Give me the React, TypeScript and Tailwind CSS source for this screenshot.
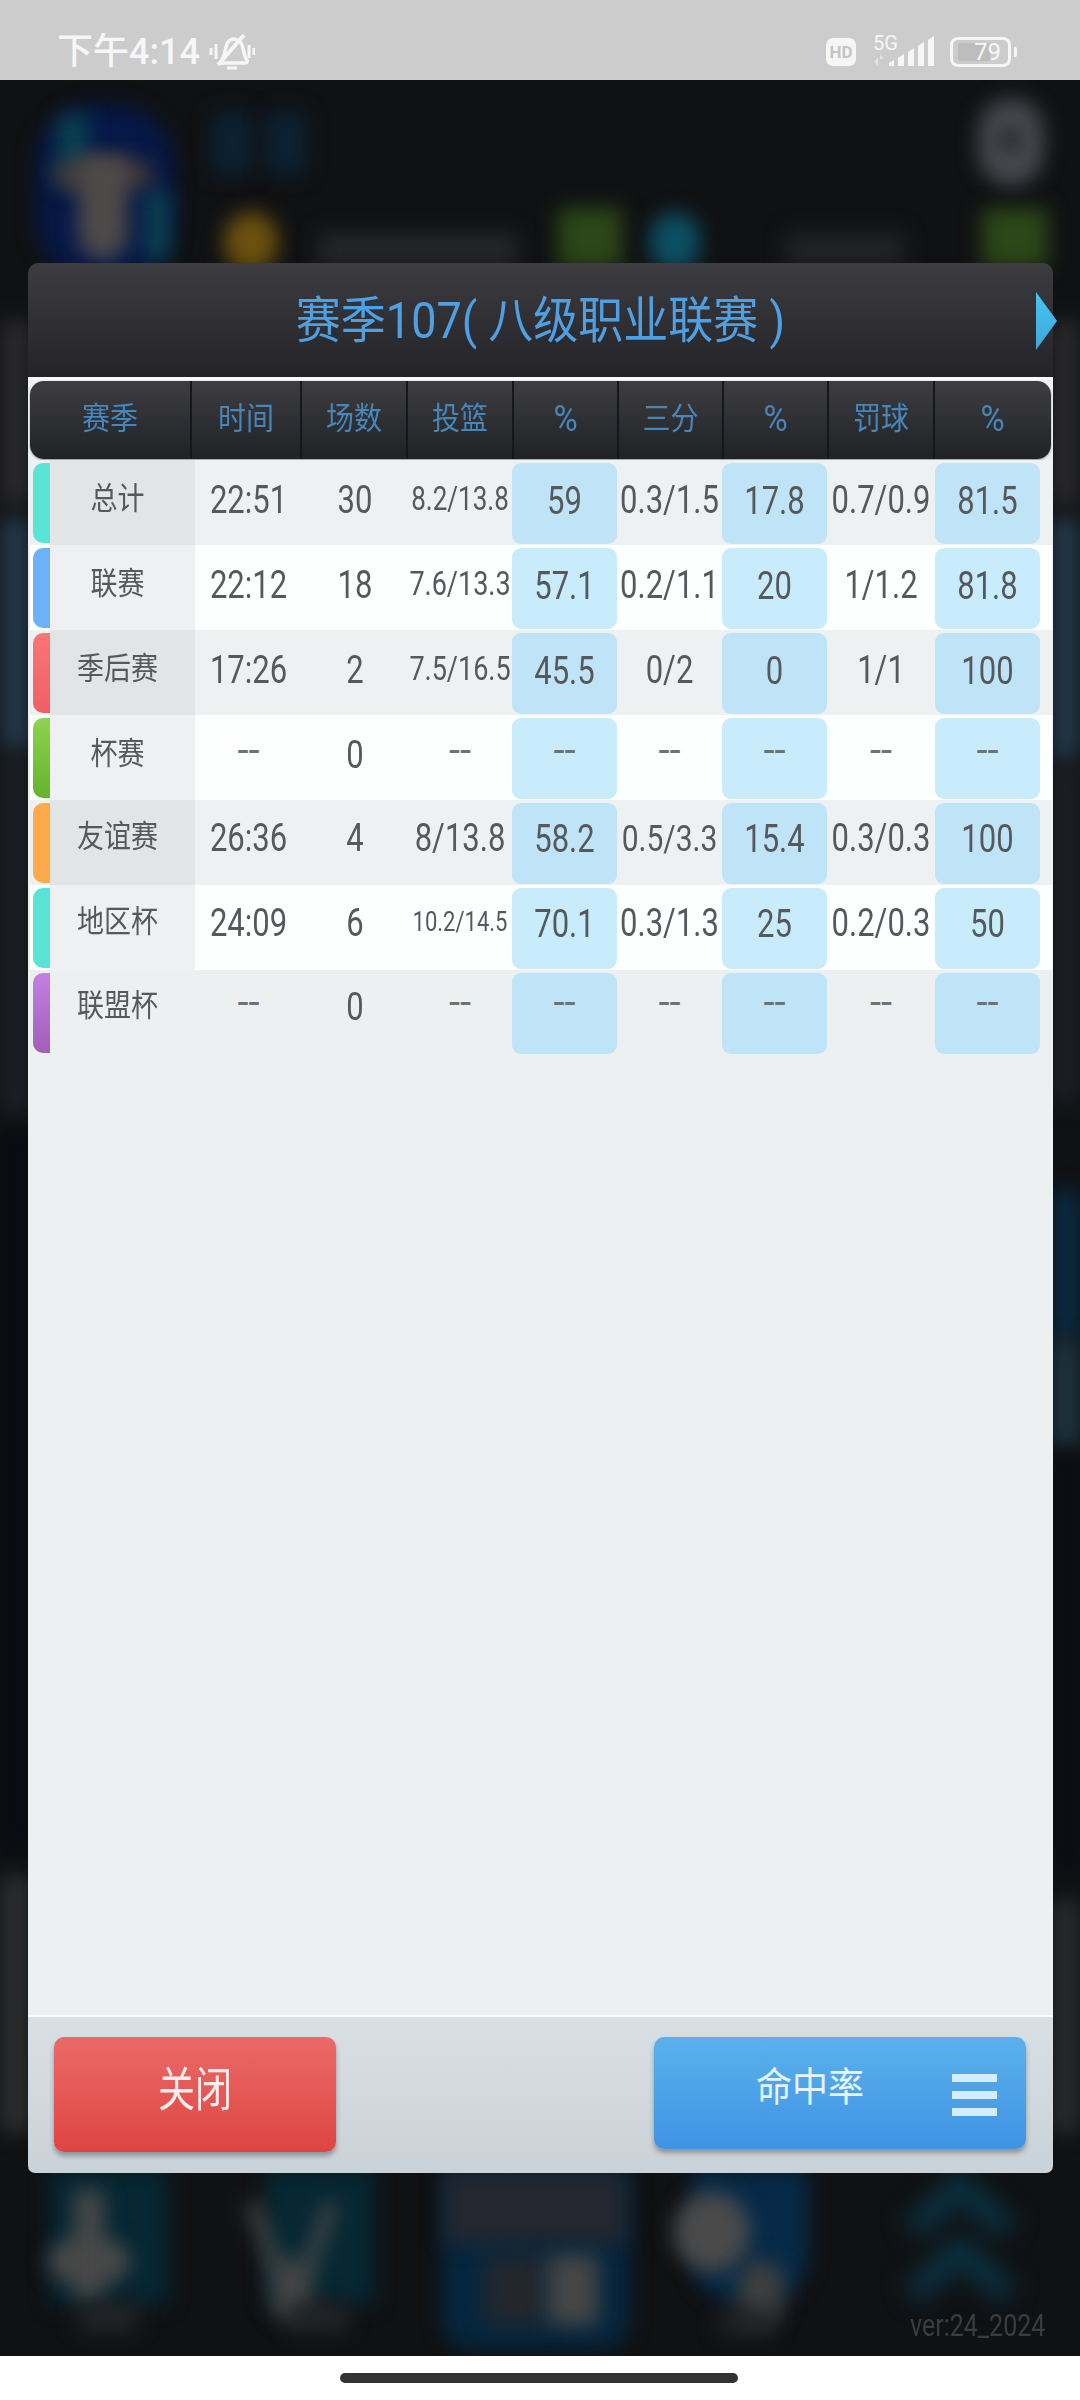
import React from 'react';

type Row = {
  name: string;
  bar: string;
  rowBg: string;
  nameBg: string;
  pctBg: string;
  vals: [string, string, string, string, string, string, string, string];
  shotSize?: string;
  threeSize?: string;
  lift?: string;
};

const rows: Row[] = [
  { name: '总计', bar: 'bg-[#5ae4d6]', rowBg: 'bg-[#eef1f2]', nameBg: 'bg-[#e1e5e6]', pctBg: 'bg-[#bfe3f7]', vals: ['22:51', '30', '8.2/13.8', '59', '0.3/1.5', '17.8', '0.7/0.9', '81.5'], shotSize: 'text-[26px]' },
  { name: '联赛', bar: 'bg-[#6cb2f8]', rowBg: 'bg-[#fdfefe]', nameBg: 'bg-[#eef0f1]', pctBg: 'bg-[#c9ecfd]', vals: ['22:12', '18', '7.6/13.3', '57.1', '0.2/1.1', '20', '1/1.2', '81.8'], shotSize: 'text-[27px]' },
  { name: '季后赛', bar: 'bg-gradient-to-b from-[#fb7676] to-[#ee5f63]', rowBg: 'bg-[#eef1f2]', nameBg: 'bg-[#e1e5e6]', pctBg: 'bg-[#bfe3f7]', vals: ['17:26', '2', '7.5/16.5', '45.5', '0/2', '0', '1/1', '100'], shotSize: 'text-[27px]' },
  { name: '杯赛', bar: 'bg-gradient-to-b from-[#90d24e] to-[#62b42b]', rowBg: 'bg-[#fdfefe]', nameBg: 'bg-[#eef0f1]', pctBg: 'bg-[#c9ecfd]', vals: ['--', '0', '--', '--', '--', '--', '--', '--'] },
  { name: '友谊赛', bar: 'bg-[#ffaa4a]', rowBg: 'bg-[#eef1f2]', nameBg: 'bg-[#e1e5e6]', pctBg: 'bg-[#bfe3f7]', vals: ['26:36', '4', '8/13.8', '58.2', '0.5/3.3', '15.4', '0.3/0.3', '100'], threeSize: 'text-[30px]', lift: '-mt-[4px]' },
  { name: '地区杯', bar: 'bg-[#5ae4d6]', rowBg: 'bg-[#fdfefe]', nameBg: 'bg-[#eef0f1]', pctBg: 'bg-[#c9ecfd]', vals: ['24:09', '6', '10.2/14.5', '70.1', '0.3/1.3', '25', '0.2/0.3', '50'], shotSize: 'text-[22px]', lift: '-mt-[4px]' },
  { name: '联盟杯', bar: 'bg-gradient-to-b from-[#c280e2] to-[#a05fb8]', rowBg: 'bg-[#edf0f1]', nameBg: 'bg-[#edf0f1]', pctBg: 'bg-[#bfe3f7]', vals: ['--', '0', '--', '--', '--', '--', '--', '--'], lift: '-mt-[6px]' },
];

const headers = ['赛季', '时间', '场数', '投篮', '%', '三分', '%', '罚球', '%'];

// backdrop behind the dialog, everything here is out of focus
const blobs = [
  'left-[36px] top-[25px] w-[138px] h-[175px] rounded-[60px] bg-[#061847]',
  'left-[58px] top-[35px] w-[30px] h-[70px] bg-[#0a4250]',
  'left-[145px] top-[110px] w-[24px] h-[70px] bg-[#0a4250]',
  'left-[52px] top-[82px] w-[102px] h-[26px] rounded-full bg-[#443838]',
  'left-[78px] top-[75px] w-[50px] h-[105px] rounded-b-[30px] bg-[#4e4a49]',
  'left-[212px] top-[32px] w-[40px] h-[62px] bg-[#0c2233]',
  'left-[266px] top-[32px] w-[40px] h-[62px] bg-[#0c2233]',
  'left-[978px] top-[18px] w-[66px] h-[88px] rounded-full bg-[#46494e]',
  'left-[1002px] top-[48px] w-[16px] h-[24px] rounded-full bg-[#1a1c20]',
  'left-[224px] top-[132px] w-[54px] h-[60px] rounded-full bg-[#6b510e]',
  'left-[318px] top-[152px] w-[200px] h-[36px] bg-[#232527]',
  'left-[558px] top-[128px] w-[64px] h-[60px] bg-[#2c4718]',
  'left-[650px] top-[132px] w-[50px] h-[60px] rounded-full bg-[#0c4f63]',
  'left-[785px] top-[152px] w-[120px] h-[36px] bg-[#202224]',
  'left-[982px] top-[128px] w-[66px] h-[60px] bg-[#2c4718]',
  'left-0 top-[240px] w-[30px] h-[185px] bg-[#2a2a2c]',
  'left-0 top-[437px] w-[30px] h-[235px] bg-[#24384a]',
  'left-0 top-[672px] w-[30px] h-[365px] bg-[#1b1f24]',
  'left-0 top-[1050px] w-[30px] h-[720px] bg-[#070b10]',
  'left-0 top-[1796px] w-[30px] h-[257px] bg-[#2c2d2f]',
  'left-[1052px] top-[240px] w-[28px] h-[185px] bg-[#2a2a2c]',
  'left-[1052px] top-[437px] w-[28px] h-[245px] bg-[#24394b]',
  'left-[1052px] top-[682px] w-[28px] h-[340px] bg-[#1c2026]',
  'left-[1052px] top-[1110px] w-[28px] h-[150px] bg-[#0a2a44]',
  'left-[1052px] top-[1260px] w-[28px] h-[110px] bg-[#1f3540]',
  'left-[1052px] top-[1370px] w-[28px] h-[420px] bg-[#0a0d14]',
  'left-[1052px] top-[1820px] w-[28px] h-[233px] bg-[#2a2b2d]',
  // bottom nav
  'left-[50px] top-[2090px] w-[118px] h-[135px] bg-[#062733]',
  'left-[48px] top-[2160px] w-[82px] h-[42px] rounded-full bg-[#484848]',
  'left-[74px] top-[2110px] w-[30px] h-[110px] bg-[#484848]',
  'left-[78px] top-[2222px] w-[60px] h-[30px] bg-[#222426]',
  'left-[265px] top-[2090px] w-[110px] h-[135px] bg-[#062733]',
  'left-[272px] top-[2180px] w-[40px] h-[60px] rounded-[14px] bg-[#454545]',
  'left-[258px] top-[2120px] w-[14px] h-[75px] -rotate-[20deg] bg-[#454545]',
  'left-[312px] top-[2120px] w-[14px] h-[75px] rotate-[20deg] bg-[#454545]',
  'left-[288px] top-[2222px] w-[60px] h-[30px] bg-[#222426]',
  'left-[442px] top-[2090px] w-[188px] h-[180px] rounded-b-[30px] bg-[#06263e]',
  'left-[445px] top-[2093px] w-[180px] h-[70px] bg-[#24272f]',
  'left-[485px] top-[2175px] w-[60px] h-[70px] bg-[#23272d]',
  'left-[548px] top-[2175px] w-[50px] h-[70px] bg-[#464646]',
  'left-[692px] top-[2090px] w-[116px] h-[135px] rounded-b-[50px] bg-[#062a48]',
  'left-[674px] top-[2112px] w-[76px] h-[80px] rounded-full bg-[#4a4a4a]',
  'left-[738px] top-[2180px] w-[46px] h-[65px] rounded-full bg-[#3e3e3e]',
  'left-[720px] top-[2230px] w-[55px] h-[25px] bg-[#222426]',
];

function Cell({ value, size, cjk }: { value: string; size?: string; cjk?: boolean }) {
  if (value === '--') {
    return <span className="inline-block text-[40px] leading-none text-[#6d7275] -translate-y-[5px]">--</span>;
  }
  return (
    <span className={`inline-block leading-none whitespace-nowrap text-[#55595c] ${cjk ? 'scale-y-[1.15]' : 'scale-y-[1.25]'} ${size ?? 'text-[31px]'}`}>
      {value}
    </span>
  );
}

function StatusBar() {
  return (
    <div className="h-20 bg-[#cccccc] flex items-center justify-between pl-[57px] pr-[63px] pt-[24px] text-[#f6f6f6]">
      <div className="flex items-center">
        <span className="text-[36px] leading-none font-medium">下午4:14</span>
        <svg className="ml-[9px]" width="46" height="36" viewBox="0 0 46 36" fill="none" stroke="#f6f6f6">
          <path d="M13 25 C17 21 15 12 20 7 C25 3 31 6 33 11 C35 17 35 23 38 26 C39 28 38 29 36 29 L12 29" strokeWidth="3.5" />
          <path d="M9 31 L35 1" strokeWidth="4" />
          <path d="M18 34 L28 34" strokeWidth="3" />
          <path d="M2 14 V21 M7 10 V25 M40 11 V24 M45 14 V21" strokeWidth="3" />
        </svg>
      </div>
      <div className="flex items-center">
        <span className="w-[30px] h-[28px] rounded-[7px] bg-[#f6f6f6] flex items-center justify-center text-[17px] font-bold leading-none text-[#c4c4c4]">HD</span>
        <div className="relative w-[62px] h-[32px] ml-[17px]">
          <span className="absolute left-0 -top-[3px] text-[20px] leading-none">5G</span>
          <svg className="absolute left-0 top-0" width="62" height="32" viewBox="0 0 62 32" fill="#f6f6f6">
            <path d="M16 30 h5 v-6 l-5 3z M25 30 h6 v-12 l-6 4z M35 30 h6 v-18 l-6 4z M45 30 h6 v-24 l-6 4z M55 30 h6 v-30 l-6 4z" />
            <path d="M1 26 l4 -5 v9z M7 18 l4 5 h-4z" fill="#e2e2e2" />
          </svg>
        </div>
        <div className="relative ml-[15px] w-[61px] h-[30px] rounded-[8px] border-[3px] border-[#f6f6f6] flex items-center justify-center">
          <span className="absolute left-[5px] top-[3px] bottom-[3px] w-[32px] bg-[#bdbdbd] rounded-[2px]" />
          <span className="relative text-[24px] leading-none ml-[14px]">79</span>
        </div>
        <span className="ml-[3px] w-[3px] h-[10px] rounded-r-[2px] bg-[#f6f6f6]" />
      </div>
    </div>
  );
}

export default function App() {
  return (
    <div className="w-[1080px] h-[2400px] flex flex-col bg-white font-[Roboto,'Noto_Sans_CJK_SC',sans-serif]">
      <StatusBar />

      <div className="relative h-[2276px] overflow-hidden bg-[#101113] pt-[183px] pl-[28px]">
        {blobs.map((b, i) => (
          <div key={i} className={`absolute blur-[10px] ${b}`} />
        ))}
        <svg className="absolute left-[900px] top-[2090px] blur-[12px]" width="120" height="140" viewBox="0 0 120 140" fill="none" stroke="#0a3344" strokeWidth="24">
          <path d="M12 60 L60 16 L108 60" />
          <path d="M12 125 L60 80 L108 125" />
        </svg>
        <span className="absolute left-[910px] top-[2233px] text-[25px] leading-none scale-y-125 blur-[0.6px] text-[#3a3d3f]">ver:24_2024</span>

        {/* dialog */}
        <div className="relative w-[1025px] h-[1910px] flex flex-col">
          <div className="h-[114px] shrink-0 rounded-t-[10px] bg-gradient-to-b from-[#3d3d41] to-[#242428] flex items-center justify-center">
            <span className="inline-block text-[45px] leading-none scale-y-110 whitespace-pre text-[#4f9fe3]">赛季107( 八级职业联赛 )</span>
          </div>
          <svg className="absolute left-[1008px] top-[29px]" width="21" height="58" viewBox="0 0 21 58">
            <defs>
              <linearGradient id="arrowFill" x1="0" y1="0" x2="0" y2="1">
                <stop offset="0" stopColor="#46c6ee" />
                <stop offset="1" stopColor="#3fa6dc" />
              </linearGradient>
            </defs>
            <path d="M0 0 L21 29 L0 58 Z" fill="url(#arrowFill)" />
          </svg>

          <div className="flex-1 min-h-0 bg-[#edf0f1] border-t-[3px] border-t-[#f8f9f9] flex flex-col">
            {/* header row */}
            <div className="mx-[2px] mt-[1px] mb-[1px] h-[78px] shrink-0 rounded-[14px] shadow-[0_1px_2px_rgba(0,0,0,0.4)] bg-gradient-to-b from-[#3d3d42] to-[#212226] grid grid-cols-[162px_110px_106px_106px_105px_105px_105px_106px_115px] divide-x-2 divide-[#14171c]">
              {headers.map((h, i) => (
                <div key={i} className="flex items-center justify-center pb-[3px]">
                  <span className={`inline-block leading-none scale-y-110 text-[#4786b8] ${h === '%' ? 'text-[33px]' : 'text-[28px]'}`}>{h}</span>
                </div>
              ))}
            </div>

            {rows.map((r) => (
              <div key={r.name} className={`${r.rowBg} h-[85px] shrink-0 ml-[2px] mr-[1px] pl-[3px] grid grid-cols-[17px_145px_107px_106px_104px_105px_105px_105px_108px_105px_10px]`}>
                <div className={`${r.bar} mt-[3px] mb-[2px] rounded-l-[10px]`} />
                <div className={`${r.nameBg} flex items-center justify-center pb-[4px] pr-[10px]`}>
                  <span className={`inline-block ${r.lift ?? ''}`}>
                    <Cell value={r.name} size="text-[27px]" cjk />
                  </span>
                </div>
                {r.vals.map((v, i) => {
                  const isPct = i === 3 || i === 5 || i === 7;
                  const size = i === 2 ? r.shotSize : i === 4 ? r.threeSize : undefined;
                  return (
                    <div key={i} className={isPct ? `${r.pctBg} mt-[3px] mb-[1px] rounded-[9px] flex items-center justify-center pb-[5px]` : 'flex items-center justify-center pb-[4px]'}>
                      <span className={`inline-block ${r.lift ?? ''}`}>
                        <Cell value={v} size={size} />
                      </span>
                    </div>
                  );
                })}
                <div />
              </div>
            ))}
          </div>

          {/* footer buttons */}
          <div className="h-[158px] shrink-0 border-t-[2px] border-t-[#fafbfb] rounded-b-[7px] bg-gradient-to-b from-[#d9e0e5] to-[#c9d2d8] flex items-start justify-between pl-[26px] pr-[27px] pt-[20px]">
            <button className="w-[282px] h-[115px] rounded-[10px] bg-gradient-to-b from-[#ea6a67] to-[#de4442] shadow-[0_4px_5px_rgba(0,0,0,0.3)] flex items-center justify-center pb-[8px]">
              <span className="inline-block text-[37px] leading-none scale-y-125 text-[#fdeeee]">关闭</span>
            </button>
            <button className="w-[372px] h-[112px] rounded-[10px] bg-gradient-to-b from-[#5cb1ec] to-[#3f93e3] shadow-[0_4px_5px_rgba(0,0,0,0.3)] flex items-center pl-[102px]">
              <span className="inline-block text-[36px] leading-none scale-y-110 text-[#e6f3fc] -translate-y-[5px]">命中率</span>
              <span className="ml-[88px] w-[45px] flex flex-col gap-[9px] translate-y-[2px]">
                <span className="block h-[8px] bg-[#d5ecfb]" />
                <span className="block h-[8px] bg-[#d5ecfb]" />
                <span className="block h-[8px] bg-[#d5ecfb]" />
              </span>
            </button>
          </div>
        </div>
      </div>

      <div className="flex-1 flex items-start justify-center pt-[17px] pr-[2px]">
        <div className="w-[398px] h-[10px] rounded-full bg-[#333333]" />
      </div>
    </div>
  );
}
